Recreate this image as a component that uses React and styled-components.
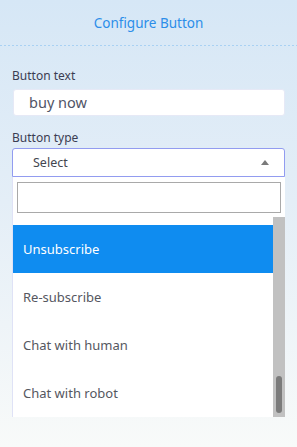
import React from "react";
import styled, { createGlobalStyle } from "styled-components";

const GlobalStyle = createGlobalStyle`
  html, body { margin: 0; padding: 0; }
  body { font-family: "Noto Sans", "Open Sans", sans-serif; }
  * { box-sizing: border-box; }
`;

const Page = styled.div`
  width: 297px;
  height: 447px;
  overflow: hidden;
  background: linear-gradient(180deg, #d6e7f6 0%, #e4eef7 45%, #f8faf9 100%);
`;

const Header = styled.div`
  height: 45px;
  display: flex;
  align-items: center;
  justify-content: center;
  color: #2c8ee9;
  font-size: 13.5px;
  padding-top: 1px;
`;

const Divider = styled.div`
  height: 1px;
  background-image: linear-gradient(90deg, #a9d1f3 0 2px, transparent 2px 4px);
  background-size: 4px 1px;
`;

const Body = styled.div`
  padding: 22px 12px 0;
  display: flex;
  flex-direction: column;
`;

const Label = styled.div`
  font-size: 12px;
  line-height: 16px;
  color: #3b3d52;
  margin-top: ${(p) => p.$top || 0}px;
  margin-bottom: ${(p) => p.$bottom || 0}px;
`;

const TextInput = styled.div`
  height: 27px;
  margin-left: 1px;
  background: #fff;
  border: 1px solid #e6e9f6;
  border-radius: 3px;
  padding: 0 0 1px 15px;
  display: flex;
  align-items: center;
  font-size: 14.5px;
  color: #505466;
`;

const SelectBox = styled.div`
  height: 29px;
  background: #fff;
  border: 1px solid #929cf0;
  border-radius: 3px 3px 0 0;
  display: flex;
  align-items: center;
  justify-content: space-between;
  padding: 0 15px 0 20px;
  font-size: 12.5px;
  color: #44464f;
`;

const Caret = styled.span`
  width: 0;
  height: 0;
  border-left: 4px solid transparent;
  border-right: 4px solid transparent;
  border-bottom: 5px solid #7a7a7a;
  margin-top: -1px;
`;

const Panel = styled.div`
  background: #fff;
  border-left: 1px solid #dfe2f6;
  display: flex;
  flex-direction: column;
  gap: 4px;
  padding-top: 5px;
`;

const Search = styled.div`
  height: 31px;
  margin: 0 4px 0 4px;
  border: 1px solid #a9a9a9;
  background: #fff;
`;

const ListRow = styled.div`
  height: 200px;
  display: flex;
`;

const Items = styled.div`
  flex: 1;
  padding-top: 8px;
  border-bottom: 1px solid #dfe2f6;
  border-bottom-left-radius: 3px;
`;

const Option = styled.div`
  height: 48px;
  display: flex;
  align-items: center;
  padding-left: 10px;
  font-size: 13px;
  color: ${(p) => (p.$active ? "#ffffff" : "#55575f")};
  background: ${(p) => (p.$active ? "#0f8cf0" : "#ffffff")};
`;

const Track = styled.div`
  width: 12px;
  background: #c1c1c1;
  display: flex;
  flex-direction: column;
  justify-content: flex-end;
  align-items: center;
  padding-bottom: 4px;
`;

const Thumb = styled.div`
  width: 6px;
  background: #7b7b7b;
  border-radius: 3px;
`;

const options = ["Unsubscribe", "Re-subscribe", "Chat with human", "Chat with robot"];

export default function App() {
  const thumbHeight = 37;
  return (
    <>
      <GlobalStyle />
      <Page>
        <Header>Configure Button</Header>
        <Divider />
        <Body>
          <Label $bottom={5}>Button text</Label>
          <TextInput>
            <span>buy now</span>
          </TextInput>
          <Label $top={14} $bottom={2}>Button type</Label>
          <SelectBox>
            <span>Select</span>
            <Caret />
          </SelectBox>
          <Panel>
            <Search />
            <ListRow>
              <Items>
                {options.map((o) => (
                  <Option key={o} $active={o === "Unsubscribe"}>{o}</Option>
                ))}
              </Items>
              <Track>
                <Thumb style={{ height: thumbHeight }} />
              </Track>
            </ListRow>
          </Panel>
        </Body>
      </Page>
    </>
  );
}
